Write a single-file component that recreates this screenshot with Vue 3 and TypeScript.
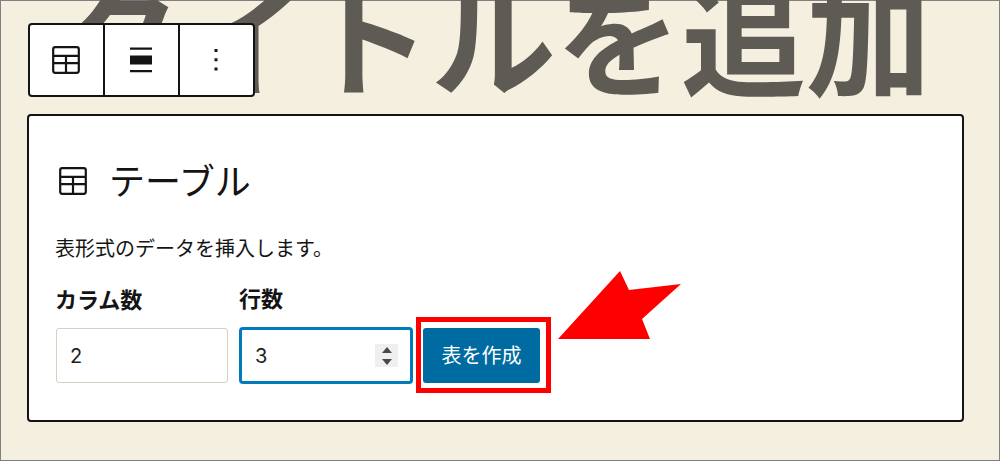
<script setup lang="ts">
import { ref } from 'vue'

const columns = ref<number>(2)
const rows = ref<number>(3)

function step(delta: number): void {
  rows.value = Math.max(1, rows.value + delta)
}
</script>

<template>
  <main class="editor">
    <header class="masthead">
      <h1 class="post-title">タイトルを追加</h1>
      <div class="toolbar" role="toolbar" aria-label="ブロックツール">
        <button type="button" class="tool" aria-label="テーブル">
          <svg class="icon" viewBox="0 0 28 28" aria-hidden="true">
            <rect x="1.200" y="1.200" width="25.600" height="25.600" rx="2" />
            <path d="M1 9.800h26M1 17.200h26M14 9.800v17" />
          </svg>
        </button>
        <button type="button" class="tool" aria-label="配置を変更">
          <svg class="icon" viewBox="0 0 28 28" aria-hidden="true">
            <path class="solid" d="M3 1.500h22v2.300H3zM3 9.500h22v9H3zM3 24h22v2.300H3z" />
          </svg>
        </button>
        <button type="button" class="tool" aria-label="詳細設定">
          <svg class="icon" viewBox="0 0 28 28" aria-hidden="true">
            <path class="solid" d="M12.500 3h3v3h-3zM12.500 12.300h3v3h-3zM12.500 21.600h3v3h-3z" />
          </svg>
        </button>
      </div>
    </header>

    <section class="panel">
      <h2 class="heading">
        <svg class="icon" viewBox="0 0 28 28" aria-hidden="true">
          <rect x="1.200" y="1.200" width="25.600" height="25.600" rx="2" />
          <path d="M1 9.800h26M1 17.200h26M14 9.800v17" />
        </svg>
        <span class="heading-text">テーブル</span>
      </h2>
      <p class="description">表形式のデータを挿入します。</p>
      <form class="form" @submit.prevent>
        <div class="field">
          <label for="columns">カラム数</label>
          <div class="box">
            <input id="columns" v-model.number="columns" type="number" min="1" />
          </div>
        </div>
        <div class="field">
          <label for="rows">行数</label>
          <div class="box active">
            <input id="rows" v-model.number="rows" type="number" min="1" />
            <span class="spinner">
              <button type="button" aria-label="増やす" @click="step(1)">
                <svg viewBox="0 0 10 6" aria-hidden="true"><path d="M5 0l5 6H0z" /></svg>
              </button>
              <button type="button" aria-label="減らす" @click="step(-1)">
                <svg viewBox="0 0 10 6" aria-hidden="true"><path d="M5 6l5-6H0z" /></svg>
              </button>
            </span>
          </div>
        </div>
        <div class="highlight">
          <button type="submit" class="create">表を作成</button>
          <svg class="arrow" viewBox="0 0 124 70" aria-hidden="true">
            <path d="M0 69L62 1L71 20L123 14L84 49L92 69z" />
          </svg>
        </div>
      </form>
    </section>
  </main>
</template>

<style>
body {
  margin: 0;
}
</style>

<style scoped>
.editor {
  box-sizing: border-box;
  min-height: 100vh;
  padding: 0 35px 36px 26px;
  border: 1px solid #808080;
  background: #f5efe0;
  color: #141414;
  font-family: "Noto Sans CJK JP", sans-serif;
}

.masthead {
  position: relative;
  display: flex;
  align-items: flex-end;
  height: 113px;
}

.post-title {
  margin: 0 0 15px 29px;
  color: #5e5b54;
  font-size: 125px;
  font-weight: 700;
  line-height: 132px;
  white-space: nowrap;
}

.toolbar {
  position: absolute;
  top: 22px;
  left: 1px;
  display: flex;
  border: 2px solid #141414;
  border-radius: 4px;
  background: #fff;
}

.tool {
  display: flex;
  align-items: center;
  justify-content: center;
  box-sizing: border-box;
  width: 75px;
  height: 70px;
  padding: 0 2px 0 0;
  border: 0;
  background: none;
}

.tool:first-child {
  width: 73px;
}

.tool + .tool {
  border-left: 2px solid #141414;
}

.icon {
  width: 28px;
  height: 28px;
  fill: none;
  stroke: #141414;
  stroke-width: 2.2;
}

.icon .solid {
  fill: #141414;
  stroke: none;
}

.panel {
  box-sizing: border-box;
  padding: 40px 26px 36px;
  border: 2px solid #141414;
  border-radius: 4px;
  background: #fff;
}

.heading {
  display: flex;
  align-items: center;
  gap: 22px;
  margin: 0 0 0 4px;
  font-size: 36px;
  font-weight: 400;
  line-height: 46px;
}

.heading-text {
  padding-bottom: 4px;
}

.description {
  margin: 26px 0 17px;
  font-size: 20px;
  line-height: 32px;
}

.form {
  display: flex;
  align-items: flex-end;
}

.field {
  width: 174px;
  margin-right: 10px;
}

.field label {
  display: block;
  margin-bottom: 14px;
  font-size: 22px;
  font-weight: 700;
  line-height: 32px;
}

.box {
  display: flex;
  align-items: center;
  box-sizing: border-box;
  height: 55px;
  margin: 1px;
  padding: 0 13px;
  border: 1px solid #d5d0bf;
  border-radius: 3px;
}

.box.active {
  height: 57px;
  margin: 0;
  padding-right: 12px;
  border: 3px solid #007cba;
  border-radius: 4px;
}

.box input {
  flex: 1;
  width: 100%;
  min-width: 0;
  padding: 0;
  border: 0;
  outline: 0;
  background: none;
  color: #1e1e1e;
  font-family: Inter, sans-serif;
  font-size: 20px;
  line-height: 28px;
  appearance: textfield;
}

.box input::-webkit-inner-spin-button {
  appearance: none;
  margin: 0;
}

.spinner {
  display: flex;
  flex-direction: column;
  align-items: center;
  justify-content: center;
  gap: 6px;
  width: 23px;
  height: 23px;
  background: #efefef;
}

.spinner button {
  display: flex;
  padding: 0;
  border: 0;
  background: none;
}

.spinner svg {
  width: 10px;
  height: 6px;
  fill: #4a4a4a;
}

.highlight {
  position: relative;
  margin: 0 0 -9px -7px;
  padding: 6px 6px 5px 2px;
  border: 5px solid #f00;
}

.create {
  display: block;
  width: 117px;
  height: 55px;
  padding: 0 0 2px;
  border: 0;
  border-radius: 3px;
  background: #006ba1;
  color: #fff;
  font-family: inherit;
  font-size: 20px;
  line-height: 28px;
}

.arrow {
  position: absolute;
  bottom: 48px;
  left: 137px;
  width: 124px;
  height: 70px;
  fill: #f00;
}
</style>
